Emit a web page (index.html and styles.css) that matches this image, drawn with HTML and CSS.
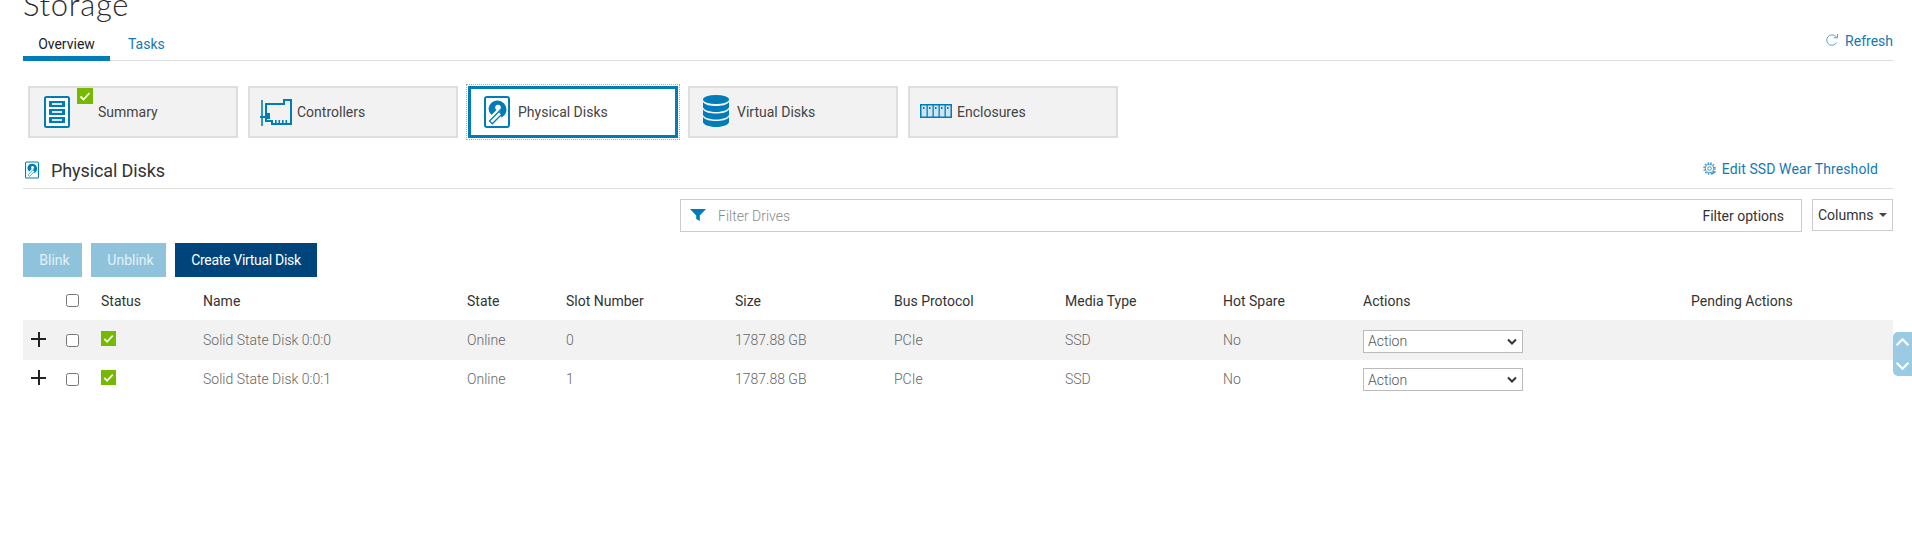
FILE: index.html
```html
<!DOCTYPE html>
<html lang="en">
<head>
<meta charset="utf-8">
<title>Storage</title>
<link rel="stylesheet" href="styles.css">
</head>
<body>
<main class="page">
  <h1 class="title">Storage</h1>
  <nav class="tabs">
    <a class="tab tab-active">Overview</a>
    <a class="tab">Tasks</a>
    <a class="refresh">
      <svg class="refresh-icon" viewBox="0 0 14 14"><path d="M11.6 9.4A5.2 5.2 0 1 1 10.4 3.2L12 4.6" fill="none" stroke="#5a9fcc" stroke-width="1"/><path d="M12.5 1v3.8H8.9" fill="none" stroke="#5a9fcc" stroke-width="1"/></svg>
      Refresh
    </a>
  </nav>

  <section class="cards">
    <div class="card card-summary">
      <svg class="icon-summary" viewBox="0 0 26 32"><rect x="1" y="1" width="24" height="30" rx="1.5" fill="#fff" stroke="#007db8" stroke-width="2"/><g fill="#007db8"><rect x="5" y="5" width="16" height="6"/><rect x="5" y="13" width="16" height="6"/><rect x="5" y="21" width="16" height="6"/></g><g fill="#d8e9f3"><rect x="8" y="7" width="10" height="2"/><rect x="8" y="15" width="10" height="2"/><rect x="8" y="23" width="10" height="2"/></g></svg>
      <span class="badge"><svg class="check" viewBox="0 0 16 16"><path d="M3.5 8.5l3 3 6-6.500" fill="none" stroke="#fff" stroke-width="1.800"/></svg></span>
      <span>Summary</span>
    </div>
    <div class="card card-controllers">
      <svg class="icon-controllers" viewBox="0 0 32 27"><g fill="none" stroke="#007db8" stroke-width="2"><path d="M2 1v26" stroke-width="1.600"/><path d="M5 5h19V1h7v24H12v-3H6V5"/></g><path d="M0 17h6v2H0zM6 14h4v6H6z" fill="#007db8"/><path d="M15 21h1.600v3H15zM18.500 21h1.600v3h-1.600zM22 21h1.600v3H22zM25.500 21h1.600v3h-1.600z" fill="#007db8"/></svg>
      <span>Controllers</span>
    </div>
    <div class="card card-active card-physical">
      <svg class="icon-disk" viewBox="0 0 26 32"><rect x="1" y="1" width="24" height="30" rx="2" fill="#fff" stroke="#007db8" stroke-width="2"/><path d="M13.500 4.500a9 9 0 0 1 9 9c0 3.500-2 6.500-5 8l-2-4.500 1-1-3-3-6 6a9 9 0 0 1-3-6.500 9 9 0 0 1 9-8z" fill="#007db8"/><circle cx="14" cy="11.500" r="2.800" fill="#fff"/><path d="M5.500 25l9.500-9.500 2.800 2.800-9.500 9.500z" fill="#fff" stroke="#007db8" stroke-width="1.300"/></svg>
      <span>Physical Disks</span>
    </div>
    <div class="card card-virtual">
      <svg class="icon-db" viewBox="0 0 26 32"><g fill="#007db8"><ellipse cx="13" cy="4.500" rx="13" ry="4.500"/><path d="M0 7c2 3 7 4 13 4s11-1 13-4v5c0 2.500-6 5-13 5S0 14.500 0 12z"/><path d="M0 14.500c2 3 7 4 13 4s11-1 13-4v5c0 2.500-6 5-13 5s-13-2.500-13-5z"/><path d="M0 22c2 3 7 4 13 4s11-1 13-4v5c0 2.500-6 5-13 5S0 29.500 0 27z"/></g></svg>
      <span>Virtual Disks</span>
    </div>
    <div class="card card-enclosures">
      <svg class="icon-enc" viewBox="0 0 32 14"><rect x="0.750" y="0.750" width="30.500" height="12.500" fill="#cfe4f1" stroke="#007db8" stroke-width="1.500"/><g fill="#007db8"><rect x="6.500" y="1" width="1.300" height="12"/><rect x="12.500" y="1" width="1.300" height="12"/><rect x="18.500" y="1" width="1.300" height="12"/><rect x="24.500" y="1" width="1.300" height="12"/><rect x="3" y="3" width="1.500" height="2"/><rect x="9" y="3" width="1.500" height="2"/><rect x="15" y="3" width="1.500" height="2"/><rect x="21" y="3" width="1.500" height="2"/><rect x="27" y="3" width="1.500" height="2"/></g></svg>
      <span>Enclosures</span>
    </div>
  </section>

  <header class="section-head">
    <svg class="icon-disk-small" viewBox="0 0 26 32"><rect x="1" y="1" width="24" height="30" rx="2" fill="#fff" stroke="#007db8" stroke-width="2"/><path d="M13.500 4.500a9 9 0 0 1 9 9c0 3.500-2 6.500-5 8l-2-4.500 1-1-3-3-6 6a9 9 0 0 1-3-6.500 9 9 0 0 1 9-8z" fill="#007db8"/><circle cx="14" cy="11.500" r="2.800" fill="#fff"/><path d="M5.500 25l9.500-9.500 2.800 2.800-9.500 9.500z" fill="#fff" stroke="#007db8" stroke-width="1.300"/></svg>
    <h2 class="section-title">Physical Disks</h2>
    <a class="edit-link">
      <svg class="gear" viewBox="0 0 14 14"><circle cx="6.500" cy="6.500" r="1.800" fill="none" stroke="#3f93c6"/><circle cx="6.500" cy="6.500" r="4.200" fill="none" stroke="#3f93c6"/><circle cx="6.500" cy="6.500" r="5.500" fill="none" stroke="#3f93c6" stroke-width="1.400" stroke-dasharray="1.500 1.400"/><path d="M8.500 12l4-2.500" stroke="#3f93c6" stroke-width="1.500"/></svg>
      Edit SSD Wear Threshold
    </a>
  </header>

  <div class="filter-bar">
    <div class="filter">
      <svg class="funnel" viewBox="0 0 16 12"><path d="M0 0h16L9.800 6.500V12L6.200 10V6.500z" fill="#007db8"/></svg>
      <span class="filter-text">Filter Drives</span>
      <span class="filter-options">Filter options</span>
    </div>
    <div class="columns-btn">Columns<span class="caret"></span></div>
  </div>

  <div class="buttons">
    <button class="btn btn-off btn-blink">Blink</button>
    <button class="btn btn-off btn-unblink">Unblink</button>
    <button class="btn btn-primary">Create Virtual Disk</button>
  </div>

  <div class="grid-row grid-head">
    <span></span>
    <span class="box"></span>
    <span>Status</span><span>Name</span><span>State</span><span>Slot Number</span><span>Size</span><span>Bus Protocol</span><span>Media Type</span><span>Hot Spare</span><span>Actions</span><span>Pending Actions</span>
  </div>
  <div class="grid-row grid-body row-shaded">
    <span class="plus"></span>
    <span class="box"></span>
    <span class="status"><svg class="check" viewBox="0 0 16 16"><path d="M3.500 8.500l3 3 6-6.500" fill="none" stroke="#fff" stroke-width="1.800"/></svg></span>
    <span>Solid State Disk 0:0:0</span><span>Online</span><span>0</span><span>1787.88 GB</span><span>PCIe</span><span>SSD</span><span>No</span>
    <span class="select">Action<svg class="chev" viewBox="0 0 10 7"><path d="M1 1.500l4 4 4-4" fill="none" stroke="#333" stroke-width="2"/></svg></span>
    <span></span>
  </div>
  <div class="grid-row grid-body">
    <span class="plus"></span>
    <span class="box"></span>
    <span class="status"><svg class="check" viewBox="0 0 16 16"><path d="M3.500 8.500l3 3 6-6.500" fill="none" stroke="#fff" stroke-width="1.800"/></svg></span>
    <span>Solid State Disk 0:0:1</span><span>Online</span><span>1</span><span>1787.88 GB</span><span>PCIe</span><span>SSD</span><span>No</span>
    <span class="select">Action<svg class="chev" viewBox="0 0 10 7"><path d="M1 1.500l4 4 4-4" fill="none" stroke="#333" stroke-width="2"/></svg></span>
    <span></span>
  </div>
</main>
<div class="scroller">
  <svg class="scroll-arrow" viewBox="0 0 14 9"><path d="M1.500 7.500L7 2l5.500 5.500" fill="none" stroke="#fff" stroke-width="2"/></svg>
  <svg class="scroll-arrow" viewBox="0 0 14 9"><path d="M1.500 1.500L7 7l5.500-5.500" fill="none" stroke="#fff" stroke-width="2"/></svg>
</div>
</body>
</html>
```

FILE: styles.css
```css
* { box-sizing: border-box; }
html, body { margin: 0; height: 560px; overflow: hidden; background: #fff; }
body { font-family: Roboto, "Liberation Sans", sans-serif; font-size: 14px; color: #444; position: relative; }
.page { padding: 0 19px 0 23px; }

.title { margin: -14px 0 0; font: 300 31px/36px Lato, "Open Sans", sans-serif; color: #2c2c2c; height: 36px; letter-spacing: .7px; }

.tabs { display: flex; align-items: center; height: 39px; border-bottom: 1px solid #ddd; }
.tab { width: 87px; height: 39px; line-height: 45px; text-align: center; color: #1478b4; font-size: 14px; border-bottom: 5px solid transparent; margin-bottom: -1px; }
.tab-active { color: #222; border-bottom-color: #007db8; }
.tab + .tab { width: auto; padding-left: 18px; }
.refresh { margin-left: auto; display: flex; align-items: center; gap: 6px; color: #1478b4; }
.refresh-icon { width: 14px; height: 14px; margin-top: -2px; }

.cards { display: flex; gap: 10px; padding: 25px 0 0 5px; height: 78px; }
.card { position: relative; width: 210px; height: 52px; display: flex; align-items: center; background: #f2f2f2; border: 2px solid #dedede; color: #444; }
.card-active { background: #fff; border: 3px solid #007db8; outline: 1px dotted #aaa; outline-offset: 1px; }
.card-summary { padding-left: 14px; }
.card-controllers { padding-left: 10px; }
.card-physical { padding-left: 13px; }
.card-virtual { padding-left: 13px; }
.card-enclosures { padding-left: 10px; }
.icon-summary { width: 26px; height: 32px; margin-right: 28px; }
.icon-controllers { width: 32px; height: 27px; margin-right: 5px; }
.icon-disk { width: 26px; height: 32px; margin-right: 8px; }
.icon-db { width: 26px; height: 32px; margin-right: 8px; margin-top: -2px; }
.icon-enc { width: 32px; height: 14px; margin-right: 5px; margin-top: -2px; }
.badge { position: absolute; left: 47px; top: 0; width: 16px; height: 16px; background: #76b900; display: flex; }
.check { width: 100%; height: 100%; display: block; }

.section-head { display: flex; align-items: center; height: 52px; border-bottom: 1px solid #ddd; margin-top: -2px; padding: 18px 0 0 2px; }
.icon-disk-small { width: 14px; height: 18px; margin-top: -4px; }
.section-title { margin: -2px 0 0 12px; font: 400 18px/24px Roboto, sans-serif; color: #333; letter-spacing: -.1px; }
.edit-link { margin-left: auto; margin-right: 15px; display: flex; align-items: center; gap: 5px; color: #1478b4; margin-top: -6px; letter-spacing: .1px; }
.gear { width: 14px; height: 14px; }

.filter-bar { display: flex; justify-content: flex-end; gap: 10px; padding-top: 10px; align-items: flex-start; }
.filter { width: 1122px; height: 33px; border: 1px solid #ccc; display: flex; align-items: center; padding: 0 17px 0 9px; }
.funnel { width: 16px; height: 12px; margin-top: -2px; }
.filter-text { margin-left: 12px; color: #8a8a8a; font-weight: 300; }
.filter-options { margin-left: auto; color: #333; }
.columns-btn { width: 81px; height: 32px; border: 1px solid #ccc; display: flex; align-items: center; padding-left: 5px; color: #333; }
.caret { margin-left: 6px; border-left: 4px solid transparent; border-right: 4px solid transparent; border-top: 4px solid #444; }

.buttons { display: flex; gap: 9px; margin-top: 11px; }
.btn { height: 34px; border: 0; padding: 0; font: 400 14px Roboto, sans-serif; color: #fff; }
.btn-off { background: #8fc3dc; color: #e4f1f7; padding-left: 4px; }
.btn-blink { width: 59px; }
.btn-unblink { width: 75px; }
.btn-primary { width: 142px; background: #00447c; letter-spacing: -.3px; }

.grid-row { display: grid; grid-template-columns: 43px 35px 102px 264px 99px 169px 159px 171px 158px 140px 328px 202px; align-items: center; }
.grid-head { height: 43px; color: #333; padding-top: 4px; }
.grid-body { height: 39px; color: #666; font-weight: 300; }
.row-shaded { background: #f2f2f2; height: 40px; margin-bottom: -1px; }
.box { width: 13px; height: 13px; border: 1px solid #767676; border-radius: 2.500px; background: #fff; }
.grid-body .box { margin-top: 1px; }
.plus { width: 15px; height: 15px; margin: -2px 0 0 8px; background: linear-gradient(#222, #222) center / 15px 2px no-repeat, linear-gradient(#222, #222) center / 2px 15px no-repeat; }
.status { width: 15px; height: 15px; background: #76b900; margin-top: -3px; }
.select { width: 160px; height: 23px; margin-top: 2px; border: 1px solid #bbb; background: #fff; display: flex; align-items: center; justify-content: space-between; padding: 0 5px 0 4px; color: #555; font-weight: 300; }
.chev { width: 10px; height: 7px; }

.scroller { position: absolute; right: 0; top: 332px; width: 19px; height: 44px; background: #9bcbe3; border-radius: 5px 0 0 5px; display: flex; flex-direction: column; justify-content: space-between; align-items: center; padding: 5px 0 5px; }
.scroll-arrow { width: 15px; height: 10px; }
```
